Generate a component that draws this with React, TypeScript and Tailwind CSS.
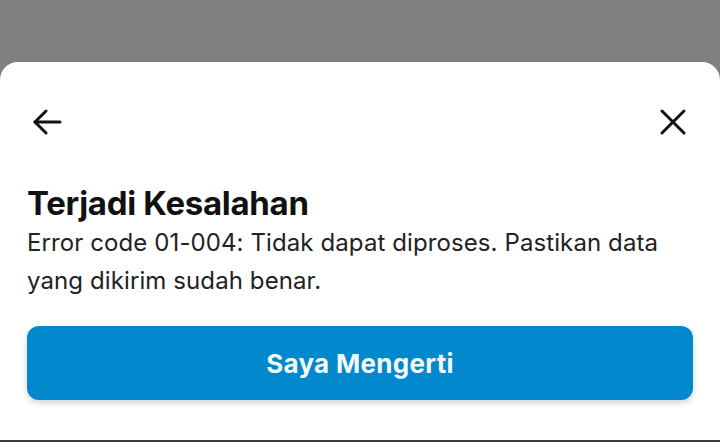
import React from "react";

const BackIcon = () => (
  <svg width="30" height="26" viewBox="0 0 30 26" fill="none" stroke="#111" strokeWidth="3" strokeLinecap="round" strokeLinejoin="round">
    <path d="M28 13H3" />
    <path d="M14 2L3 13l11 11" />
  </svg>
);

const CloseIcon = () => (
  <svg width="26" height="26" viewBox="0 0 26 26" fill="none" stroke="#111" strokeWidth="3" strokeLinecap="round">
    <path d="M2 2l22 22" />
    <path d="M24 2L2 24" />
  </svg>
);

const App = () => {
  return (
    <div className="flex h-[442px] w-full flex-col bg-[#808080] font-['Inter',sans-serif]">
      <div className="h-[62px] shrink-0" />
      <div className="flex flex-1 flex-col rounded-t-[18px] bg-white px-[27px]">
        <div className="mt-[47px] flex h-[26px] items-center justify-between pl-[5px] pr-[7px]">
          <button>
            <BackIcon />
          </button>
          <button>
            <CloseIcon />
          </button>
        </div>

        <h2 className="mt-[48px] text-[33px] font-bold leading-[40px] tracking-[-0.3px] text-[#111]">
          Terjadi Kesalahan
        </h2>
        <p className="mt-[1px] max-w-[640px] text-[24px] leading-[38px] tracking-[0.1px] text-[#222]">
          Error code 01-004: Tidak dapat diproses. Pastikan data yang dikirim sudah benar.
        </p>

        <button className="mt-[26px] flex h-[74px] w-full items-center justify-center rounded-[12px] bg-[#0288cc] text-[26px] font-bold tracking-[0.3px] text-[#f4f9fc] shadow-[0_3px_6px_rgba(0,0,0,0.18)]">
          Saya Mengerti
        </button>
      </div>
      <div className="h-[2px] shrink-0 bg-[#3a3a3a]" />
    </div>
  );
};

export default App;
